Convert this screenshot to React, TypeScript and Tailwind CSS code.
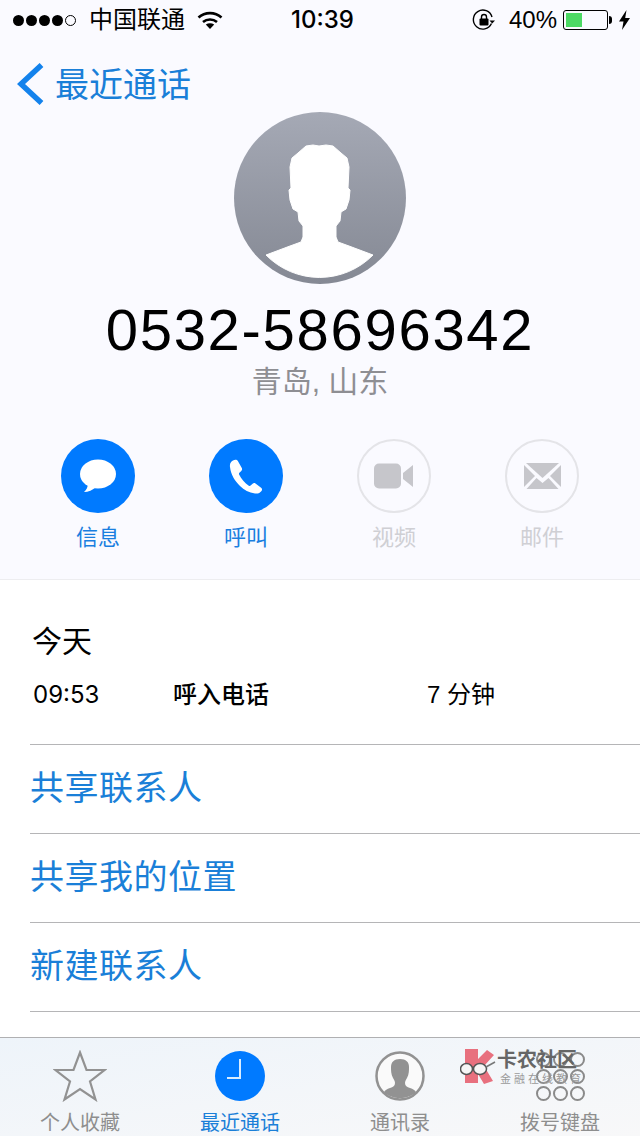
const cjk = "font-['Liberation_Sans','Noto_Sans_CJK_SC',sans-serif]"
const latin = "font-['Inter','Noto_Sans_CJK_SC',sans-serif]"

function StatusBar() {
  return (
    <div className="flex h-10 items-center text-black">
      <div className="ml-[13px] flex w-[68px] gap-[2px]">
        {[0, 1, 2, 3].map((i) => (
          <span key={i} className="h-[11px] w-[11px] rounded-full bg-black" />
        ))}
        <span className="h-[11px] w-[11px] rounded-full border border-black" />
      </div>
      <span className="ml-[8px] w-[98px] text-[24px] leading-none">中国联通</span>
      <svg className="ml-[10px] h-[18px] w-[26px]" viewBox="0 0 26 18" fill="none" stroke="black" strokeWidth="2.6">
        <path d="M1.5 6.5C8 .6 18 .6 24.5 6.5" />
        <path d="M6 11c4-3.4 10-3.4 14 0" />
        <path d="M13 18l-4.200-4.600c2.400-1.600 6-1.600 8.400 0z" fill="black" stroke="none" />
      </svg>
      <span className={`ml-[68px] w-[66px] text-[24px] font-medium leading-none ${latin}`}>10:39</span>
      <svg className="ml-[115px] h-[24px] w-[24px]" viewBox="0 0 24 24" fill="none" stroke="black" strokeWidth="1.4">
        <path d="M19.5 15.5A9.5 9.5 0 1 1 20 9" />
        <path d="M17.5 12.5h5.5l-2.8 3z" fill="black" stroke="none" />
        <rect x="7.5" y="10.5" width="9" height="7" rx="1" fill="black" stroke="none" />
        <path d="M9.5 11V9a2.5 2.5 0 0 1 5 0v2" />
      </svg>
      <span className="ml-[13px] text-[24px] leading-none">40%</span>
      <div className="ml-[6px] flex h-[20px] w-[45px] rounded-[3px] border border-black p-[2px]">
        <div className="w-[16px] bg-[#4cd964]" />
      </div>
      <span className="ml-[1px] h-[8px] w-[3px] rounded-r-full bg-black" />
      <svg className="ml-[7px] h-[20px] w-[11px]" viewBox="0 0 11 20" fill="black">
        <path d="M7.5 0L0 11.5h4.5L3 20l8-12H6.2z" />
      </svg>
    </div>
  )
}

function Avatar() {
  return (
    <div className="h-[172px] w-[172px] overflow-hidden rounded-full bg-gradient-to-b from-[#a5a9b5] to-[#858994]">
      <svg viewBox="0 0 172 172" className="h-full w-full" fill="white">
        <path d="M79 33l-7 1-8 7-6 5-2 9 1 21-2 2 1 10 3 9 5 3 1 9 4 5 0 11-2 5-11 4-24 9A75 75 0 0 0 139 143l-24-9-11-4-2-5 0-11 4-5 1-9 5-3 3-9 1-10-2-2 1-21-2-9-6-5-8-7-7-1-7 1z" strokeLinejoin="round" stroke="white" strokeWidth="1" />
      </svg>
    </div>
  )
}

function ActionButton({ label, on, children }: { label: string; on?: boolean; children: React.ReactNode }) {
  return (
    <div className="flex w-[148px] flex-col items-center">
      <div
        className={
          on
            ? 'flex h-[74px] w-[74px] items-center justify-center rounded-full bg-[#007aff]'
            : 'flex h-[74px] w-[74px] items-center justify-center rounded-full border-2 border-[#e4e4e8]'
        }
      >
        {children}
      </div>
      <span className={on ? 'mt-[12px] text-[22px] leading-[26px] text-[#1a7fe0]' : 'mt-[12px] text-[22px] leading-[26px] text-[#cfcfd4]'}>
        {label}
      </span>
    </div>
  )
}

function LinkRow({ label }: { label: string }) {
  return (
    <div className="flex h-[89px] items-center border-b border-[#b5b5b7] pb-[2px] text-[34px] leading-none tracking-[0.5px] text-[#1a7fd8]">
      {label}
    </div>
  )
}

function Tab({ label, on, children }: { label: string; on?: boolean; children: React.ReactNode }) {
  return (
    <div className="flex w-[160px] flex-col items-center pt-[11px]">
      <div className="flex h-[54px] items-center justify-center">{children}</div>
      <span className={on ? 'mt-[8px] text-[20px] leading-[24px] text-[#1a7fd8]' : 'mt-[8px] text-[20px] leading-[24px] text-[#8e8e8e]'}>
        {label}
      </span>
    </div>
  )
}

export default function App() {
  return (
    <div className={`relative flex h-[1136px] w-[640px] flex-col overflow-hidden bg-white ${cjk}`}>
      <div className="h-[580px] border-b border-[#ededf0] bg-[#fafaff]">
        <StatusBar />
        <div className="mt-[24px] flex h-[42px] items-center">
          <svg className="-mt-[2px] ml-[17px] h-[42px] w-[27px]" viewBox="0 0 27 42" fill="none" stroke="#1382ec" strokeWidth="5.5">
            <path d="M24.5 2L4 21l20.5 19" />
          </svg>
          <span className="ml-[11px] text-[34px] leading-none text-[#1a7fd8]">最近通话</span>
        </div>
        <div className="mt-[6px] flex flex-col items-center">
          <Avatar />
          <div className="mt-[12px] text-[58px] leading-[68px] tracking-[1.7px] text-black">0532-58696342</div>
          <div className="text-[30px] leading-[36px] text-[#8e8e93]">青岛, 山东</div>
        </div>
        <div className="ml-[24px] mt-[39px] flex">
          <ActionButton label="信息" on>
            <svg className="h-[40px] w-[40px]" viewBox="0 0 40 40" fill="white">
              <ellipse cx="20" cy="18" rx="18" ry="14.5" />
              <path d="M10 27c0 4-1.500 7-4 9 4 0 9-2 12-5z" />
            </svg>
          </ActionButton>
          <ActionButton label="呼叫" on>
            <svg className="h-[36px] w-[36px]" viewBox="0 0 36 36" fill="white">
              <path d="M5 2.500C3 3.500 1.500 5.500 2 9c1 8 5 14 10 19 4 4 9 6.500 15 7.500 3 .4 5-.6 6.500-2.500.9-1.200.7-2.300-.4-3.200l-5.600-4.300c-1-.7-2-.6-2.900.2l-2 1.900c-.6.500-1.200.5-1.800.1-4-2.700-7.500-6.800-9.700-11.300-.3-.7-.2-1.200.3-1.700l1.900-1.800c.9-.9 1-1.800.5-2.900L10 3.200C9 1.600 7 1.400 5 2.500z" />
            </svg>
          </ActionButton>
          <ActionButton label="视频">
            <svg className="h-[26px] w-[40px]" viewBox="0 0 40 26" fill="#c6c6cb">
              <rect x="0" y="0.500" width="27" height="25" rx="5" />
              <path d="M29 10l10-8v22l-10-8z" />
            </svg>
          </ActionButton>
          <ActionButton label="邮件">
            <svg className="h-[26px] w-[37px]" viewBox="0 0 37 26" fill="#c6c6cb">
              <path d="M2 0h33L18.500 15z" />
              <path d="M0 2v22l11-11z" />
              <path d="M37 2v22L26 13z" />
              <path d="M2.500 26l10-11 6 5 6-5 10 11z" />
            </svg>
          </ActionButton>
        </div>
      </div>

      <div className="pl-[30px]">
        <div className="h-[165px] border-b border-[#b5b5b7] text-black">
          <div className="ml-[2px] pt-[44px] text-[30px] leading-[36px]">今天</div>
          <div className="ml-[3px] mt-[21px] flex text-[24px] leading-[28px]">
            <span className={`w-[140px] ${latin}`}>09:53</span>
            <span className="w-[254px] font-medium">呼入电话</span>
            <span>7 分钟</span>
          </div>
        </div>
        <LinkRow label="共享联系人" />
        <LinkRow label="共享我的位置" />
        <LinkRow label="新建联系人" />
      </div>

      <div className="absolute bottom-0 left-0 flex h-[99px] w-[640px] border-t border-[#b0b0b2] bg-gradient-to-br from-[#eef4fa] to-[#f8f8f9]">
        <Tab label="个人收藏">
          <svg className="h-[52px] w-[54px]" viewBox="0 0 54 52" fill="none" stroke="#929292" strokeWidth="2.2">
            <path d="M27 2.500l6.500 17.500h18l-14.500 11.500 5.500 18L27 39 11.500 49.500l5.500-18L2.500 20h18z" />
          </svg>
        </Tab>
        <Tab label="最近通话" on>
          <svg className="h-[50px] w-[50px]" viewBox="0 0 50 50">
            <circle cx="25" cy="25" r="25" fill="#007aff" />
            <path d="M25 8v19H12" fill="none" stroke="#d8ecff" strokeWidth="2" />
          </svg>
        </Tab>
        <Tab label="通讯录">
          <svg className="h-[50px] w-[50px]" viewBox="0 0 50 50">
            <circle cx="25" cy="25" r="23.500" fill="#fafafa" stroke="#929292" strokeWidth="2.500" />
            <path d="M25 8c-6 0-9 3-9 8 0 4 0 7 2 11 1 2 2 3 2 5 0 3-2 4-5 5-3 1-5 2-6 4 4 4 10 6 16 6s12-2 16-6c-1-2-3-3-6-4-3-1-5-2-5-5 0-2 1-3 2-5 2-4 2-7 2-11 0-5-3-8-9-8z" fill="#929292" />
          </svg>
        </Tab>
        <Tab label="拨号键盘">
          <div className="grid grid-cols-3 gap-x-[2px] gap-y-[2px]">
            {[0, 1, 2, 3, 4, 5, 6, 7, 8].map((i) => (
              <span key={i} className="h-[15px] w-[15px] rounded-full border-2 border-[#8a8a8a]" />
            ))}
          </div>
        </Tab>
      </div>

      {/* watermark over the tab bar */}
      <div className="absolute left-[460px] top-[1049px] flex">
        <svg className="h-[36px] w-[37px]" viewBox="0 0 37 36">
          <path d="M5 0h13v10l9-9 7 5-10 11 9 15-9 3-6-10v9H5z" fill="#e8707e" />
          <ellipse cx="6.500" cy="20" rx="6" ry="5.500" fill="#f6f6f6" stroke="#555" strokeWidth="1.500" />
          <ellipse cx="20" cy="20" rx="6.500" ry="5.500" fill="#f6f6f6" stroke="#555" strokeWidth="1.500" />
          <path d="M26 18l9-5" stroke="#777" strokeWidth="1.500" />
        </svg>
        <div className="flex flex-col">
          <span className="text-[20px] font-bold leading-[22px] text-[#666]">卡农社区</span>
          <span className="ml-[3px] mt-[1px] text-[11px] leading-[14px] tracking-[3px] text-[#9a9a9a]">金融在线教育</span>
        </div>
      </div>
    </div>
  )
}
